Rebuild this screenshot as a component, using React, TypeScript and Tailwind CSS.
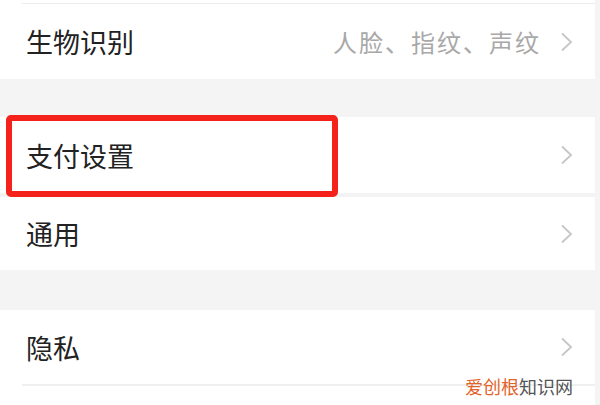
const font = { fontFamily: '"Noto Sans CJK SC", "Noto Sans", sans-serif' };

function Chevron() {
  return (
    <svg width="13" height="20" viewBox="0 0 13 20" className="shrink-0">
      <polyline points="2,1.5 11,10 2,18.5" fill="none" stroke="#c6c6c6" strokeWidth="1.8" />
    </svg>
  );
}

function Row({ label, value, height }: { label: string; value?: string; height: string }) {
  return (
    <div className={`flex items-center justify-between pl-[26px] pr-[22px] ${height}`}>
      <span className="text-[27px] text-[#222] leading-none">{label}</span>
      <div className="flex items-center gap-[19px]">
        {value && <span className="text-[24px] text-[#a8a8a8] leading-none tracking-[2px]">{value}</span>}
        <Chevron />
      </div>
    </div>
  );
}

export default function App() {
  return (
    <div className="relative w-[600px] h-[405px] overflow-hidden bg-[#f4f4f4]" style={font}>
      <div className="bg-white mr-[5px] pt-[3px]">
        <div className="ml-[22px] h-px bg-[#ececec]" />
        <Row label="生物识别" value="人脸、指纹、声纹" height="h-[75px]" />
      </div>

      <div className="h-[38px]" />

      <div className="bg-white mr-[5px]">
        <div className="relative">
          <Row label="支付设置" height="h-[76px]" />
          <div className="absolute left-[6px] -top-[2px] w-[332px] h-[82px] border-[6px] border-[#f5221b] rounded-[5px]" />
        </div>
        <div className="h-[4px] bg-[#f3f3f3]" />
        <Row label="通用" height="h-[73px]" />
      </div>

      <div className="h-[40px]" />

      <div className="bg-white mr-[5px] h-[95px]">
        <Row label="隐私" height="h-[74px]" />
        <div className="ml-[22px] h-[2px] bg-[#efefef]" />
      </div>

      <div className="absolute right-[27px] bottom-[10px] text-[18px] leading-none">
        <span className="text-[#e2632a]">爱创根</span>
        <span className="text-[#555]">知识网</span>
      </div>
    </div>
  );
}
